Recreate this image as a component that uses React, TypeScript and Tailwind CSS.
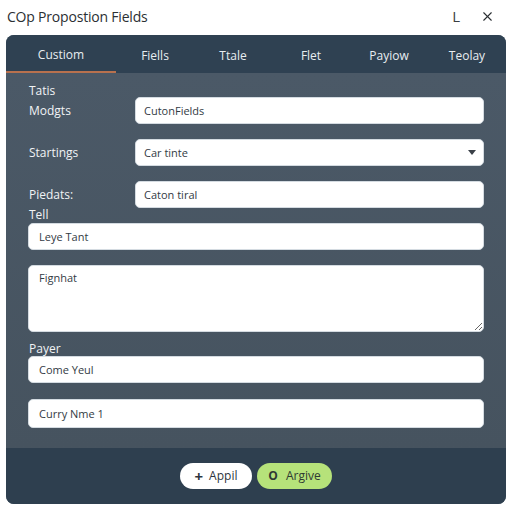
import { X } from "lucide-react";

const tabs = ["Custiom", "Fiells", "Ttale", "Flet", "Payiow", "Teolay"];

const font = "font-['Open_Sans','Noto_Sans',sans-serif]";

function Field({ value, className = "" }: { value: string; className?: string }) {
  return (
    <input
      readOnly
      value={value}
      className={`block h-[27px] rounded-[5px] border border-[#d4dbe1] bg-white px-[8px] text-[11px] text-[#333b44] outline-none ${className}`}
    />
  );
}

export default function App() {
  return (
    <div className={`h-[512px] w-[512px] bg-white ${font}`}>
      <div className="flex h-[35px] items-center px-[7px] pb-[3px]">
        <h1 className="flex-1 text-[14px] tracking-[-0.2px] text-[#2b2f33]">COp Propostion Fields</h1>
        <span className="mr-[20px] text-[15px] text-[#3a3e42]">L</span>
        <X size={15} strokeWidth={1.8} className="mr-[10px] text-[#2b2f33]" />
      </div>

      <div className="mx-[6px] overflow-hidden rounded-[8px] bg-[#485664]">
        <div className="flex h-[38px] bg-[#2f4152]">
          {tabs.map((t, i) => (
            <div
              key={t}
              className={`flex items-center justify-center pt-[4px] text-[12px] text-[#e8edf1] ${
                i === 0 ? "w-[110px] border-b-2 border-[#b8714e]" : "w-[78px]"
              }`}
            >
              {t}
            </div>
          ))}
        </div>

        <div className="bg-gradient-to-b from-[#4b5967] to-[#46535f] px-[22px] pt-[9px] pb-[20px] text-[12px] font-medium text-[#f1f3f5]">
          <div className="flex items-end">
            <div className="w-[107px] pl-[1px]">
              <div className="leading-[18px]">Tatis</div>
              <div className="mb-[2px] leading-[22px]">Modgts</div>
            </div>
            <Field value="CutonFields" className="flex-1 font-normal" />
          </div>

          <div className="mt-[15px] flex items-center">
            <div className="w-[107px] pl-[1px]">Startings</div>
            <div className="relative flex-1">
              <Field value="Car tinte" className="w-full font-normal" />
              <svg width="8" height="6" viewBox="0 0 8 6" className="absolute right-[8px] top-[11px]">
                <path d="M0 0h8L4 5z" fill="#3a4048" />
              </svg>
            </div>
          </div>

          <div className="mt-[15px] flex items-center">
            <div className="w-[107px] pl-[1px]">Piedats:</div>
            <Field value="Caton tiral" className="flex-1 font-normal" />
          </div>

          <div className="mb-[1px] pl-[1px] leading-[14px]">Tell</div>
          <Field value="Leye Tant" className="w-full px-[10px] font-normal" />

          <textarea
            readOnly
            defaultValue="Fignhat"
            className="mt-[15px] block h-[67px] w-full rounded-[5px] border border-[#d4dbe1] bg-white px-[10px] py-[4px] text-[11px] font-normal text-[#333b44] outline-none"
          />

          <div className="mt-[10px] pl-[1px] leading-[14px]">Payer</div>
          <Field value="Come Yeul" className="w-full px-[10px] font-normal" />
          <Field value="Curry Nme 1" className="mt-[16px] h-[29px] w-full px-[10px] font-normal" />
        </div>

        <div className="flex h-[56px] items-center justify-center gap-[5px] bg-[#2e3f4f]">
          <button className="flex h-[26px] w-[72px] items-center justify-center gap-[6px] rounded-full bg-white text-[12px] text-[#2e3540]">
            <span className="text-[15px] font-bold leading-none">+</span>
            Appil
          </button>
          <button className="flex h-[26px] w-[75px] items-center justify-center gap-[8px] rounded-full bg-[#b6e27a] text-[12px] text-[#2f3a33]">
            <span className="text-[12px] font-bold leading-none">O</span>
            Argive
          </button>
        </div>
      </div>
    </div>
  );
}
